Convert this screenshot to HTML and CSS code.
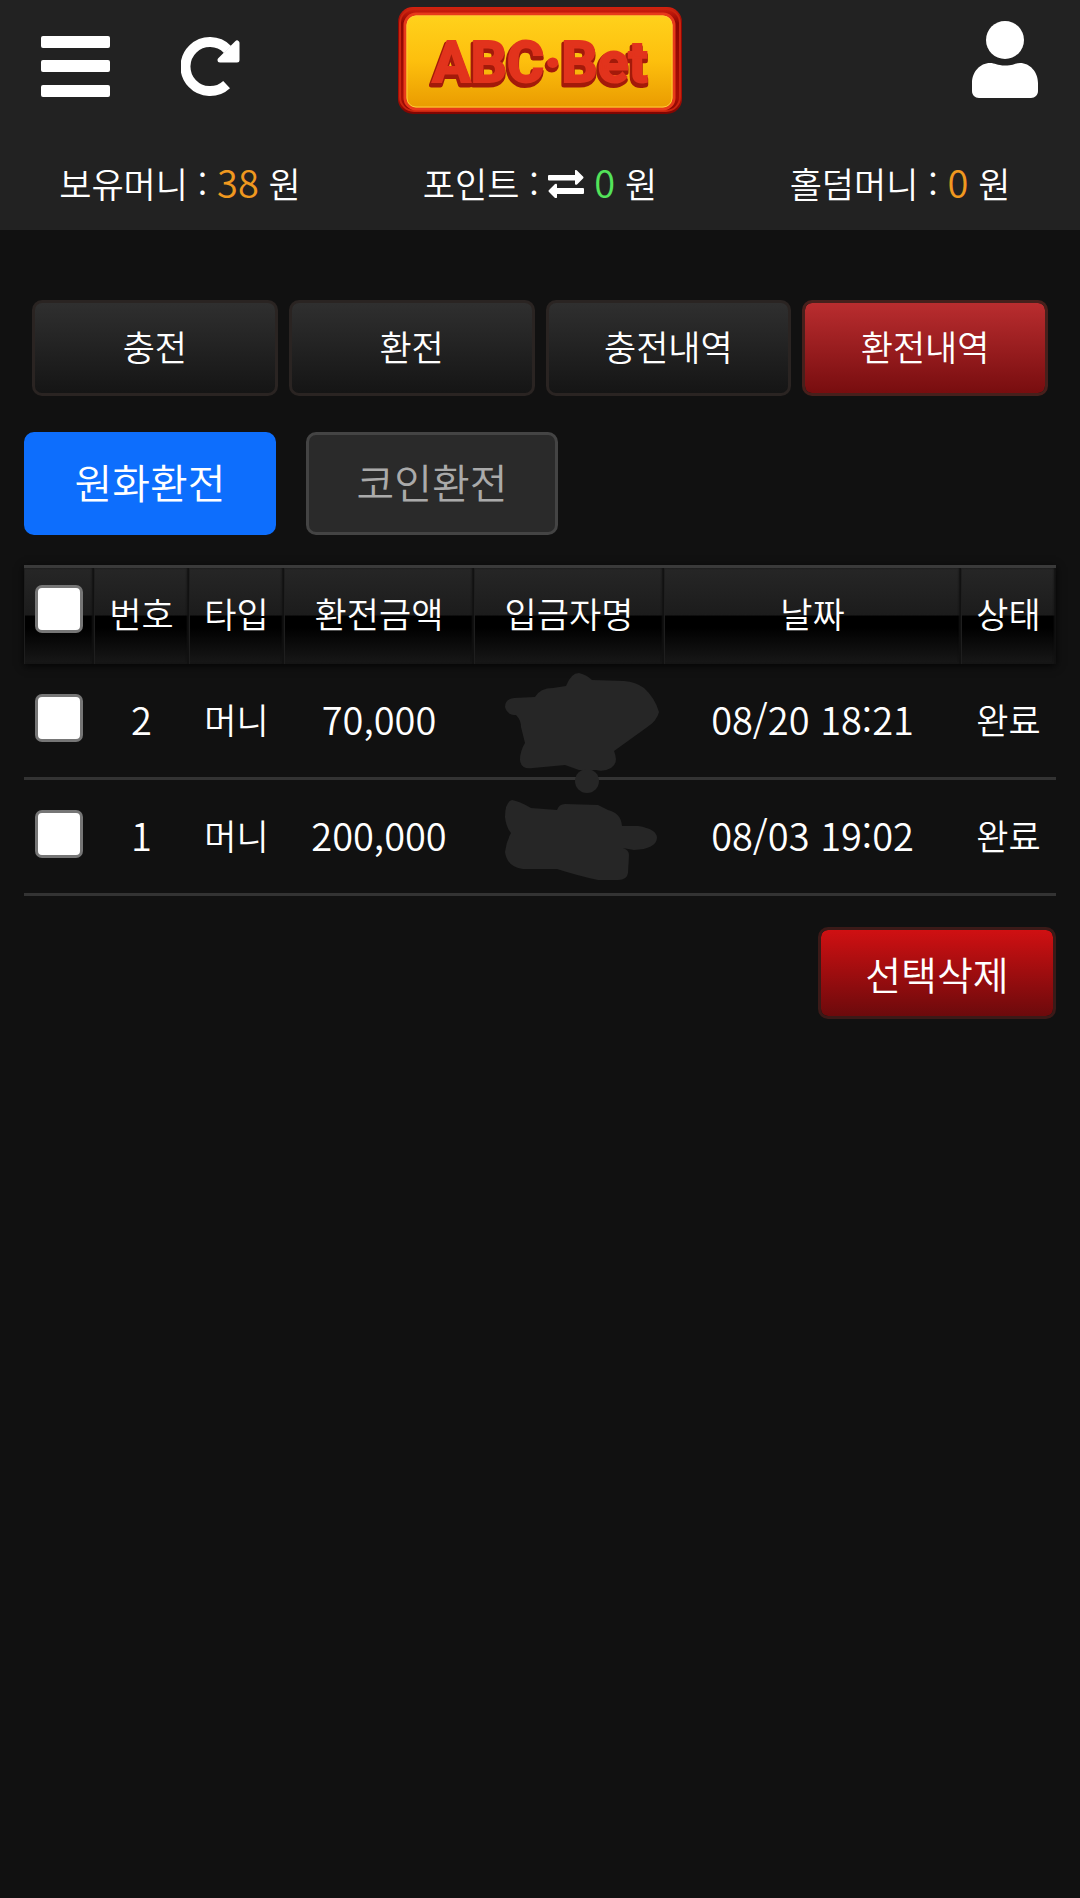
FILE: index.html
```html
<!DOCTYPE html>
<html lang="ko">
  <head>
    <meta charset="UTF-8" />
    <meta name="viewport" content="width=device-width, initial-scale=1.0" />
    <title>ABC·Bet 환전내역</title>
    <link rel="stylesheet" href="styles.css">
  </head>

  <body>
    <header class="header">
      <div class="top-bar">
        <div class="top-left">
          <button type="button" class="icon-btn" aria-label="메뉴">
            <svg width="69" height="62" viewBox="0 0 69 62" fill="#fff">
              <rect x="0" y="0" width="69" height="12" rx="2" />
              <rect x="0" y="24" width="69" height="12" rx="2" />
              <rect x="0" y="49" width="69" height="12" rx="2" />
            </svg>
          </button>
          <button type="button" class="icon-btn" aria-label="새로고침">
            <svg width="59" height="60" viewBox="0 0 59 60">
              <path d="M45.6 47.6A24.5 24.5 0 1 1 46.5 12.5" fill="none" stroke="#fff" stroke-width="10" />
              <path d="M56 6V23H39z" fill="#fff" stroke="#fff" stroke-width="5" stroke-linejoin="round" />
            </svg>
          </button>
        </div>

        <a href="#" class="logo" aria-label="ABC·Bet">
          <svg width="284" height="108" viewBox="0 0 284 108">
            <defs>
              <linearGradient id="gold" x1="0" y1="0" x2="0" y2="1">
                <stop offset="0" stop-color="#ffd21c" />
                <stop offset="0.5" stop-color="#fdbf0d" />
                <stop offset="1" stop-color="#e99a00" />
              </linearGradient>
              <linearGradient id="frame" x1="0" y1="0" x2="0" y2="1">
                <stop offset="0" stop-color="#d8200f" />
                <stop offset="0.15" stop-color="#8c0703" />
                <stop offset="0.85" stop-color="#a80e05" />
                <stop offset="1" stop-color="#7c0502" />
              </linearGradient>
            </defs>
            <rect x="0" y="0" width="284" height="107" rx="15" fill="url(#frame)" />
            <rect x="2" y="2" width="280" height="102" rx="14" fill="none" stroke="#c9240f" stroke-width="2" />
            <rect x="7" y="7" width="269" height="95" rx="11" fill="url(#gold)" stroke="#e8391a" stroke-width="3" />
            <rect x="9" y="9" width="265" height="91" rx="9" fill="none" stroke="#ffca3a" stroke-width="1" />
            <g class="logo-text">
              <text x="141" y="78" class="logo-shade">ABC·Bet</text>
              <text x="142" y="75" class="logo-face" aria-hidden="true">ABC·Bet</text>
            </g>
          </svg>
        </a>

        <div class="top-right">
          <button type="button" class="icon-btn" aria-label="내 정보">
            <svg width="66" height="77" viewBox="0 0 66 77" fill="#fff">
              <circle cx="33" cy="19" r="19" />
              <path d="M18 42c5 0 7 2.500 15 2.500s10-2.500 15-2.500c10 0 18 9 18 20v8c0 4-3 7-7 7H7c-4 0-7-3-7-7v-8c0-11 8-20 18-20z" />
            </svg>
          </button>
        </div>
      </div>

      <div class="balance">
        <div>보유머니 : <span class="num orange">38</span> 원</div>
        <div>
          포인트 :
          <svg class="exchange" width="36" height="28" viewBox="0 0 36 28" fill="#fff">
            <path d="M1 5h26V1q0-2 2-0.500l6 6q1 1 0 2l-6 6q-2 1-2-1v-3H1q-1 0-1-1V6q0-1 1-1z" />
            <path d="M35 18H9v-3q0-2-2-1l-6 6q-1 1 0 2l6 6q2 1 2-1v-3h26q1 0 1-1v-4q0-1-1-1z" />
          </svg>
          <span class="num green">0</span> 원
        </div>
        <div>홀덤머니 : <span class="num orange">0</span> 원</div>
      </div>
    </header>

    <main class="content">
      <nav class="tabs">
        <button type="button">충전</button>
        <button type="button">환전</button>
        <button type="button">충전내역</button>
        <button type="button" class="active">환전내역</button>
      </nav>

      <div class="kinds">
        <button type="button" class="active">원화환전</button>
        <button type="button">코인환전</button>
      </div>

      <table class="history">
        <colgroup>
          <col class="col-check">
          <col class="col-no">
          <col class="col-type">
          <col class="col-amount">
          <col class="col-name">
          <col class="col-date">
          <col class="col-state">
        </colgroup>
        <thead>
          <tr>
            <th class="check"><input type="checkbox" aria-label="전체 선택" /></th>
            <th>번호</th>
            <th>타입</th>
            <th>환전금액</th>
            <th>입금자명</th>
            <th>날짜</th>
            <th>상태</th>
          </tr>
        </thead>
        <tbody>
          <tr>
            <td class="check"><input type="checkbox" aria-label="2번 선택" /></td>
            <td class="num">2</td>
            <td>머니</td>
            <td class="num">70,000</td>
            <td class="name">
              <svg class="mask" width="155" height="208" viewBox="505 673 155 208" fill="#262626">
                <path d="M505 707Q505 699 514 698L535 697Q540 688 553 688L566 686Q571 673 579 673Q587 675 592 680L624 681Q636 682 644 688Q655 698 659 712Q657 721 646 728L614 751Q619 763 611 768Q604 772 596 770L579 770L565 765L533 768Q521 770 520 760Q520 751 525 743L521 727Q521 720 516 715Q507 715 505 707Z" />
                <circle cx="587" cy="781" r="12" />
                <path d="M505 817Q505 802 512 800Q519 801 531 808L557 810Q559 804 565 804L598 805L608 810Q621 813 622 826L638 826Q657 829 657 838Q656 849 634 850L623 848Q629 850 629 855L628 873Q627 880 618 880L598 880Q579 876 557 869L523 869Q507 867 505 852Q506 842 511 833Q506 827 505 817Z" />
              </svg>
            </td>
            <td class="num">08/20 18:21</td>
            <td>완료</td>
          </tr>
          <tr>
            <td class="check"><input type="checkbox" aria-label="1번 선택" /></td>
            <td class="num">1</td>
            <td>머니</td>
            <td class="num">200,000</td>
            <td></td>
            <td class="num">08/03 19:02</td>
            <td>완료</td>
          </tr>
        </tbody>
      </table>

      <div class="actions">
        <button type="button" class="delete-btn">선택삭제</button>
      </div>
    </main>
  </body>
</html>
```
FILE: styles.css
```css
* {
  box-sizing: border-box;
}

body {
  margin: 0;
  background-color: #111;
  color: #fff;
  font-family: "Noto Sans CJK KR", sans-serif;
  font-size: 35px;
  font-weight: 350;
  line-height: 50px;
}

button {
  padding: 0;
  border: none;
  background: none;
  color: #fff;
  font: inherit;
  cursor: pointer;
}

svg {
  display: block;
}

.num {
  font-size: 38px;
}

/* header */
.header {
  background-color: #222;
}

.top-bar {
  display: grid;
  grid-template-columns: 1fr auto 1fr;
  align-items: center;
  padding: 7px 42px 0 41px;
}

.top-left {
  display: flex;
  align-items: center;
  gap: 71px;
  padding-top: 12px;
}

.top-right {
  display: flex;
  justify-content: flex-end;
  padding-bottom: 4px;
}

.logo-text {
  font-family: Roboto, sans-serif;
  font-size: 57px;
  font-weight: 700;
  text-anchor: middle;
}

.logo-shade {
  fill: #a31a0a;
  stroke: #a31a0a;
  stroke-width: 5px;
  stroke-linejoin: round;
}

.logo-face {
  fill: #e2331c;
  stroke: #e2331c;
  stroke-width: 2px;
}

.balance {
  display: grid;
  grid-template-columns: repeat(3, 1fr);
  padding: 43px 0 22px;
  text-align: center;
  white-space: nowrap;
}

.balance .num {
  line-height: 1;
}

.exchange {
  display: inline-block;
}

.orange {
  color: #f0981f;
}

.green {
  color: #53e35a;
}

/* content */
.content {
  padding: 70px 24px 24px;
}

.tabs {
  display: grid;
  grid-template-columns: repeat(4, 1fr);
  gap: 11px;
  padding: 0 8px;
}

.tabs button {
  height: 96px;
  padding-bottom: 4px;
  border: 3px solid #2a2422;
  border-radius: 10px;
  background: linear-gradient(#303030, #141414) border-box;
}

.tabs .active {
  border-color: #47201c;
  background: linear-gradient(#b92d2f, #780d0f) padding-box;
}

.kinds {
  display: flex;
  gap: 30px;
  margin-top: 36px;
}

.kinds button {
  width: 252px;
  height: 103px;
  padding-bottom: 6px;
  border: 3px solid #444;
  border-radius: 10px;
  background-color: #2a2a2a;
  color: #aaa;
  font-size: 41px;
}

.kinds .active {
  border-color: #0d6efd;
  background-color: #0d6efd;
  color: #fff;
}

.history {
  width: 100%;
  margin-top: 30px;
  border-spacing: 0;
  table-layout: fixed;
  text-align: center;
  white-space: nowrap;
}

.col-check {
  width: 70px;
}

.col-no,
.col-type,
.col-state {
  width: 95px;
}

.col-amount,
.col-name {
  width: 190px;
}

.history thead {
  box-shadow: 0 2px 8px rgba(0, 0, 0, 0.8);
}

.history th {
  height: 99px;
  padding: 0 0 6px;
  border-top: 3px solid #3a3a3a;
  background: linear-gradient(#262626, #1c1c1c 49%, #000 50%, #000 62%, #181818);
  box-shadow: inset 1px 0 0 #1e1e1e, inset -2px 0 2px #111;
  font-weight: 350;
}

.history td {
  height: 116px;
  padding: 0 0 4px;
  border-bottom: 3px solid #333;
}

.history th.check {
  padding-bottom: 14px;
}

.history td.check {
  padding-bottom: 6px;
}

.check input {
  display: block;
  width: 48px;
  height: 48px;
  margin: 0 auto;
  appearance: none;
  border: 3px solid #767676;
  border-radius: 7px;
  background-color: #fff;
}

.check input:checked {
  background-color: #0d6efd;
}

.name {
  position: relative;
}

/* covers the depositor names of both rows */
.mask {
  position: absolute;
  top: 9px;
  left: 31px;
  z-index: 1;
}

.actions {
  display: flex;
  justify-content: flex-end;
  margin-top: 31px;
}

.delete-btn {
  width: 238px;
  height: 92px;
  border: 3px solid #3b1a18;
  border-radius: 10px;
  background: linear-gradient(#d01012, #6c0a0c) padding-box;
  font-size: 39px;
}
```
